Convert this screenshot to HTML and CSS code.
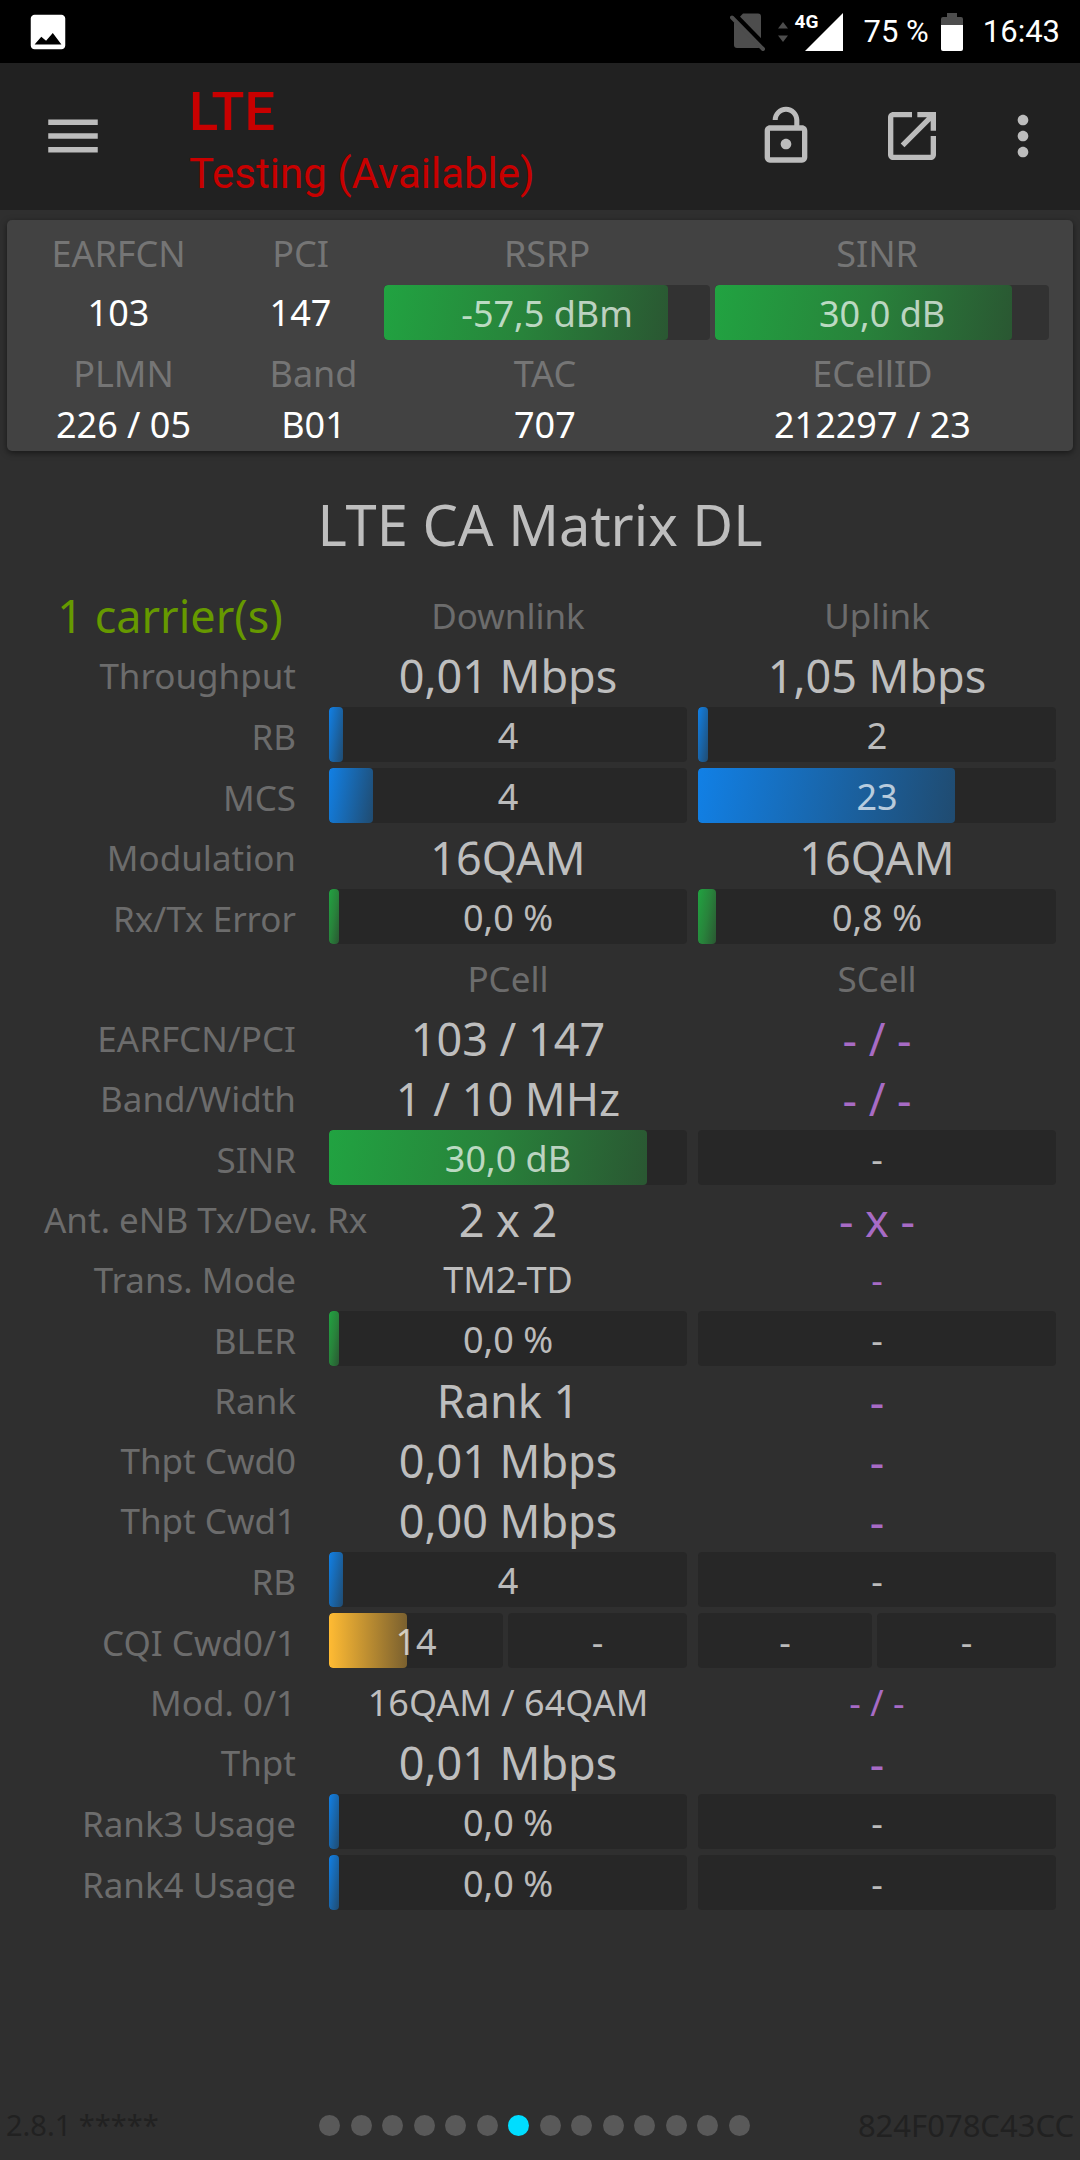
FILE: index.html
```html
<!DOCTYPE html>
<html lang="en">
<head>
<meta charset="utf-8">
<meta name="viewport" content="width=device-width, initial-scale=1">
<title>LTE CA Matrix DL</title>
<link rel="stylesheet" href="styles.css">
</head>
<body>
<div class="status-bar">
  <svg class="status-image" viewBox="0 0 24 24" aria-hidden="true"><path d="M21 19V5c0-1.100-.9-2-2-2H5c-1.100 0-2 .9-2 2v14c0 1.100.9 2 2 2h14c1.100 0 2-.9 2-2zM8.500 14.500l2.500 2 3.500-4 4.500 6H5z"/></svg>
  <svg class="status-sim" viewBox="0 0 36 38" aria-hidden="true">
    <path class="dim" d="M13 .5h15q3 0 3 3V32q0 3-3 3H7q-3 0-3-3V10z"/>
    <path class="gap" d="M2 -1L38 36"/>
    <path class="slash" d="M2 4.500L33 36"/>
  </svg>
  <svg class="status-arrows" viewBox="0 0 10 20" aria-hidden="true"><path class="dim" d="M5 0l5 6.500H0zM5 20l5-6.500H0z"/></svg>
  <div class="status-signal">
    <span class="network">4G</span>
    <svg viewBox="0 0 38 38" aria-hidden="true"><path d="M38 0v38H0z"/></svg>
  </div>
  <span class="status-percent">75 %</span>
  <svg class="status-battery" viewBox="0 0 22 38" aria-hidden="true">
    <path class="dim" d="M6 0h10v4h4q2 0 2 2v6H0V6q0-2 2-2h4z"/>
    <path d="M0 12h22v24q0 2-2 2H2q-2 0-2-2z"/>
  </svg>
  <time class="status-time">16:43</time>
</div>

<header class="app-bar">
  <button class="icon-button menu" aria-label="Menu"><svg viewBox="0 0 24 24"><path d="M3 18h18v-2H3v2zm0-5h18v-2H3v2zm0-7v2h18V6H3z"/></svg></button>
  <div class="titles">
    <div class="title">LTE</div>
    <div class="subtitle">Testing (Available)</div>
  </div>
  <button class="icon-button lock" aria-label="Unlock"><svg viewBox="0 0 24 24"><path d="M12 17c1.100 0 2-.9 2-2s-.9-2-2-2-2 .9-2 2 .9 2 2 2zm6-9h-1V6c0-2.760-2.240-5-5-5S7 3.240 7 6h1.900c0-1.710 1.390-3.100 3.100-3.100 1.710 0 3.100 1.390 3.100 3.100v2H6c-1.100 0-2 .9-2 2v10c0 1.100.9 2 2 2h12c1.100 0 2-.9 2-2V10c0-1.100-.9-2-2-2zm0 12H6V10h12v10z"/></svg></button>
  <button class="icon-button open" aria-label="Open in new window"><svg viewBox="0 0 24 24"><path d="M19 19H5V5h7V3H5c-1.110 0-2 .9-2 2v14c0 1.100.89 2 2 2h14c1.100 0 2-.9 2-2v-7h-2v7zM14 3v2h3.590l-9.830 9.830 1.410 1.410L19 6.410V10h2V3h-7z"/></svg></button>
  <button class="icon-button more" aria-label="More options"><svg viewBox="0 0 24 24"><path d="M12 8c1.100 0 2-.9 2-2s-.9-2-2-2-2 .9-2 2 .9 2 2 2zm0 2c-1.100 0-2 .9-2 2s.9 2 2 2 2-.9 2-2-.9-2-2-2zm0 6c-1.100 0-2 .9-2 2s.9 2 2 2 2-.9 2-2-.9-2-2-2z"/></svg></button>
</header>

<main>
  <section class="card">
    <table class="cell-info radio">
      <thead><tr><th>EARFCN</th><th>PCI</th><th>RSRP</th><th>SINR</th></tr></thead>
      <tbody><tr>
        <td>103</td><td>147</td>
        <td><div class="bar"><i class="fill green" style="width:87%"></i><span>-57,5 dBm</span></div></td>
        <td><div class="bar"><i class="fill green" style="width:89%"></i><span>30,0 dB</span></div></td>
      </tr></tbody>
    </table>
    <table class="cell-info network-id">
      <thead><tr><th>PLMN</th><th>Band</th><th>TAC</th><th>ECellID</th></tr></thead>
      <tbody><tr><td>226 / 05</td><td>B01</td><td>707</td><td>212297 / 23</td></tr></tbody>
    </table>
  </section>

  <h1>LTE CA Matrix DL</h1>

  <table class="matrix">
    <thead><tr><th class="carriers">1 carrier(s)</th><th>Downlink</th><th>Uplink</th></tr></thead>
    <tbody>
      <tr><th>Throughput</th><td>0,01 Mbps</td><td>1,05 Mbps</td></tr>
      <tr><th>RB</th><td><div class="bar"><i class="fill blue" style="width:4%"></i><span>4</span></div></td><td><div class="bar"><i class="fill blue"></i><span>2</span></div></td></tr>
      <tr><th>MCS</th><td><div class="bar"><i class="fill blue" style="width:12.300%"></i><span>4</span></div></td><td><div class="bar"><i class="fill blue" style="width:71.800%"></i><span>23</span></div></td></tr>
      <tr><th>Modulation</th><td>16QAM</td><td>16QAM</td></tr>
      <tr><th>Rx/Tx Error</th><td><div class="bar"><i class="fill green"></i><span>0,0 %</span></div></td><td><div class="bar"><i class="fill green" style="width:5%"></i><span>0,8 %</span></div></td></tr>
    </tbody>
    <tbody>
      <tr class="group"><td></td><th>PCell</th><th>SCell</th></tr>
      <tr><th>EARFCN/PCI</th><td>103 / 147</td><td class="none">- / -</td></tr>
      <tr><th>Band/Width</th><td>1 / 10 MHz</td><td class="none">- / -</td></tr>
      <tr><th>SINR</th><td><div class="bar"><i class="fill green" style="width:88.800%"></i><span>30,0 dB</span></div></td><td><div class="bar"><span>-</span></div></td></tr>
      <tr><th>Ant. eNB Tx/Dev. Rx</th><td>2 x 2</td><td class="none">- x -</td></tr>
      <tr><th>Trans. Mode</th><td class="small">TM2-TD</td><td class="small none">-</td></tr>
      <tr><th>BLER</th><td><div class="bar"><i class="fill green"></i><span>0,0 %</span></div></td><td><div class="bar"><span>-</span></div></td></tr>
      <tr><th>Rank</th><td>Rank 1</td><td class="none">-</td></tr>
      <tr><th>Thpt Cwd0</th><td>0,01 Mbps</td><td class="none">-</td></tr>
      <tr><th>Thpt Cwd1</th><td>0,00 Mbps</td><td class="none">-</td></tr>
      <tr><th>RB</th><td><div class="bar"><i class="fill blue" style="width:4%"></i><span>4</span></div></td><td><div class="bar"><span>-</span></div></td></tr>
      <tr><th>CQI Cwd0/1</th>
        <td><div class="pair"><div class="bar"><i class="fill orange" style="width:45%"></i><span>14</span></div><div class="bar"><span>-</span></div></div></td>
        <td><div class="pair"><div class="bar"><span>-</span></div><div class="bar"><span>-</span></div></div></td></tr>
      <tr><th>Mod. 0/1</th><td class="small">16QAM / 64QAM</td><td class="small none">- / -</td></tr>
      <tr><th>Thpt</th><td>0,01 Mbps</td><td class="none">-</td></tr>
      <tr><th>Rank3 Usage</th><td><div class="bar"><i class="fill blue"></i><span>0,0 %</span></div></td><td><div class="bar"><span>-</span></div></td></tr>
      <tr><th>Rank4 Usage</th><td><div class="bar"><i class="fill blue"></i><span>0,0 %</span></div></td><td><div class="bar"><span>-</span></div></td></tr>
    </tbody>
  </table>
</main>

<footer class="footer">
  <span>2.8.1 *****</span>
  <div class="pager"><i></i><i></i><i></i><i></i><i></i><i></i><i class="current"></i><i></i><i></i><i></i><i></i><i></i><i></i><i></i></div>
  <span class="device">824F078C43CC</span>
</footer>
</body>
</html>
```
FILE: styles.css
```css
* { box-sizing: border-box; }

body {
  margin: 0;
  min-height: 100vh;
  display: flex;
  flex-direction: column;
  background: #2f2f2f;
  color: #bebebe;
  font-family: "Noto Sans", sans-serif;
  font-size: 36px;
}

svg { display: block; fill: currentColor; }

/* Status bar */
.status-bar {
  height: 63px;
  display: flex;
  align-items: center;
  padding: 0 20px 0 25px;
  background: #000;
  color: #fff;
  font-family: Roboto, sans-serif;
  font-size: 31px;
}
.dim { fill: #4d4d4d; }
.status-image { width: 46px; margin-right: auto; }
.status-sim { width: 36px; height: 38px; margin-right: 12px; }
.gap { stroke: #000; stroke-width: 5; }
.slash { stroke: #4d4d4d; stroke-width: 4; stroke-linecap: round; }
.status-arrows { width: 10px; height: 20px; margin-right: 7px; }
.status-signal {
  position: relative;
  width: 48px;
  padding-left: 10px;
  margin-right: 21px;
}
.network {
  position: absolute;
  left: 0;
  top: 0;
  font-size: 19px;
  line-height: 18px;
  font-weight: 700;
}
.status-percent { margin-right: 12px; }
.status-battery { width: 22px; height: 38px; margin-right: 20px; }

/* App bar */
.app-bar {
  height: 147px;
  display: flex;
  align-items: center;
  padding: 0 25px 2px 40px;
  background: #212121;
  color: #bcbcbc;
}
.icon-button {
  padding: 0;
  border: 0;
  background: none;
  color: inherit;
}
.icon-button svg { width: 64px; height: 64px; }
.menu svg { width: 66px; height: 66px; }
.titles {
  flex: 1;
  padding: 12px 0 0 83px;
  color: #c80000;
  font-family: Roboto, sans-serif;
}
.title { font-size: 54px; line-height: 64px; font-weight: 500; }
.subtitle { font-size: 42px; line-height: 60px; }
.lock { margin-right: 62px; }
.open { margin-right: 47px; }

/* Tables */
table { width: 100%; border-spacing: 0; table-layout: fixed; }
th, td { padding: 0; text-align: center; white-space: nowrap; }
th { font-weight: 400; color: #757575; }

.bar {
  position: relative;
  height: 55px;
  line-height: 57px;
  border-radius: 4px;
  overflow: hidden;
  background: #272727;
  color: rgba(255, 255, 255, 0.7);
  font-size: 36px;
}
.bar span { position: relative; }
.fill {
  position: absolute;
  inset: 0 auto 0 0;
  width: 10px;
  border-radius: 4px;
}
.green { background: linear-gradient(100deg, #21a341, #28833b 50%, #2a5732); }
.blue { background: linear-gradient(100deg, #1180e6, #1966ab 50%, #204b70); }
.orange { background: linear-gradient(90deg, #ffbb33, #7a602f); }
.pair { display: grid; grid-template-columns: 174fr 179fr; gap: 5px; }

/* Serving cell card */
.card {
  margin: 10px 7px 0;
  padding: 8px 18px 1px 13px;
  border-radius: 5px;
  background: #424242;
  box-shadow: 0 2px 6px rgba(0, 0, 0, 0.5);
}
.cell-info { line-height: 51px; }
.cell-info td { color: #fff; }
.cell-info .bar { background: #323232; }
.radio td { padding: 6px 0 8px; }
.radio th:nth-child(1) { width: 197px; }
.radio th:nth-child(2) { width: 167px; }
.radio th:nth-child(3) { width: 32%; }
.radio :is(th, td):nth-child(3) { padding-right: 5px; }
.radio td:nth-child(4) { padding-right: 6px; }
.radio th:nth-child(4) { padding-right: 16px; }
.network-id th:nth-child(1) { width: 207px; }
.network-id th:nth-child(2) { width: 173px; }
.network-id th:nth-child(3) { width: 28%; }

h1 {
  margin: 38px 0 25px;
  text-align: center;
  font-size: 56px;
  line-height: 70px;
  font-weight: 400;
}

/* Carrier aggregation matrix */
.matrix { padding: 0 18px 0 44px; line-height: 57px; }
.matrix :is(th, td) { padding: 3px 6px 0 5px; }
.matrix td:has(.bar) { padding-bottom: 3px; }
.matrix td { font-size: 45px; }
.matrix td.small { font-size: 36px; }
.matrix th { color: #6c6c6c; font-size: 35px; }
.matrix tbody th:first-child { padding: 3px 28px 0 0; text-align: right; }
.matrix th.carriers {
  width: 280px;
  padding: 3px 28px 0 0;
  color: #669900;
  font-size: 45px;
}
.matrix .none { color: #a76bc5; }

/* Footer */
.footer {
  margin-top: auto;
  padding: 0 6px 15px;
  display: grid;
  grid-template-columns: 313fr 431fr 324fr;
  align-items: center;
  color: #212121;
  font-size: 29px;
  line-height: 40px;
}
.device { text-align: right; font-size: 31px; }
.pager { display: flex; justify-content: space-between; }
.pager i { width: 21px; height: 21px; border-radius: 50%; background: #595959; }
.pager .current { background: #00ddff; }
```
